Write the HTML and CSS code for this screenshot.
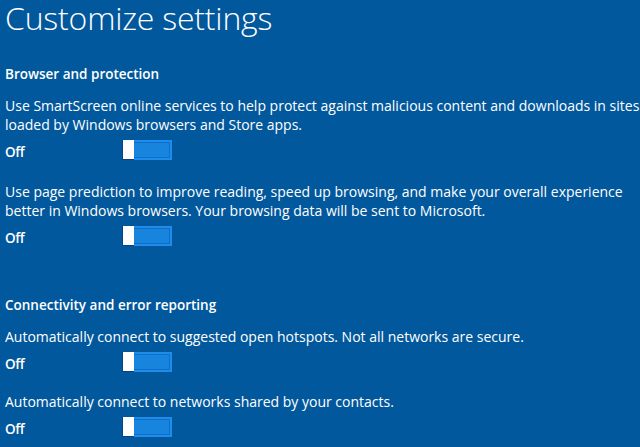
FILE: index.html
```html
<!DOCTYPE html>
<html>
<head>
<meta charset="utf-8">
<link rel="stylesheet" href="styles.css">
</head>
<body>
<main class="page">
  <h1 class="title">Customize settings</h1>

  <section class="group">
    <h2 class="group-head">Browser and protection</h2>
    <div class="setting">
      <p class="desc">Use SmartScreen online services to help protect against malicious content and downloads in sites loaded by Windows browsers and Store apps.</p>
      <div class="toggle-row"><span class="state">Off</span><span class="toggle"><span class="thumb"></span></span></div>
    </div>
    <div class="setting">
      <p class="desc">Use page prediction to improve reading, speed up browsing, and make your overall experience better in Windows browsers. Your browsing data will be sent to Microsoft.</p>
      <div class="toggle-row"><span class="state">Off</span><span class="toggle"><span class="thumb"></span></span></div>
    </div>
  </section>

  <section class="group group-second">
    <h2 class="group-head">Connectivity and error reporting</h2>
    <div class="setting">
      <p class="desc">Automatically connect to suggested open hotspots. Not all networks are secure.</p>
      <div class="toggle-row"><span class="state">Off</span><span class="toggle"><span class="thumb"></span></span></div>
    </div>
    <div class="setting">
      <p class="desc">Automatically connect to networks shared by your contacts.</p>
      <div class="toggle-row"><span class="state">Off</span><span class="toggle"><span class="thumb"></span></span></div>
    </div>
  </section>
</main>
</body>
</html>
```

FILE: styles.css
```css
html, body {
  margin: 0;
  padding: 0;
  background: #02589c;
  width: 640px;
  height: 447px;
  overflow: hidden;
}
body {
  font-family: "Open Sans", "Liberation Sans", sans-serif;
  color: #ffffff;
}
.page {
  padding: 0 0 0 5px;
  display: flex;
  flex-direction: column;
}
.title {
  margin: 0;
  font-weight: 300;
  font-size: 32px;
  line-height: 36px;
  letter-spacing: -0.2px;
}
.group {
  display: flex;
  flex-direction: column;
}
.group-head {
  margin: 29px 0 0 0;
  font-size: 13.5px;
  font-weight: 600;
  line-height: 19px;
}
.group-second .group-head {
  margin-top: 50px;
}
.setting {
  margin-top: 12px;
}
.group-second .setting {
  margin-top: 12px;
}
.setting + .setting {
  margin-top: 22px;
}
.group-second .setting + .setting {
  margin-top: 20px;
}
.desc {
  margin: 0;
  font-size: 14px;
  line-height: 19px;
  letter-spacing: 0;
}
.toggle-row {
  display: flex;
  align-items: flex-start;
  height: 20px;
  margin-top: 6px;
}
.state {
  width: 117px;
  font-size: 13.5px;
  font-weight: 600;
  line-height: 20px;
  letter-spacing: -0.4px;
  padding-top: 2px;
}
.toggle {
  position: relative;
  box-sizing: border-box;
  width: 50px;
  height: 20px;
  background: #1784de;
  border: 2px solid #1e8cec;
  box-shadow: inset 0 0 0 1px #0f6ec6;
}
.thumb {
  position: absolute;
  left: -2px;
  top: -2px;
  width: 12px;
  height: 20px;
  background: #ffffff;
  border-left: 1px solid #0a3f86;
  border-bottom: 1px solid #0a3f86;
  box-sizing: border-box;
}
```
